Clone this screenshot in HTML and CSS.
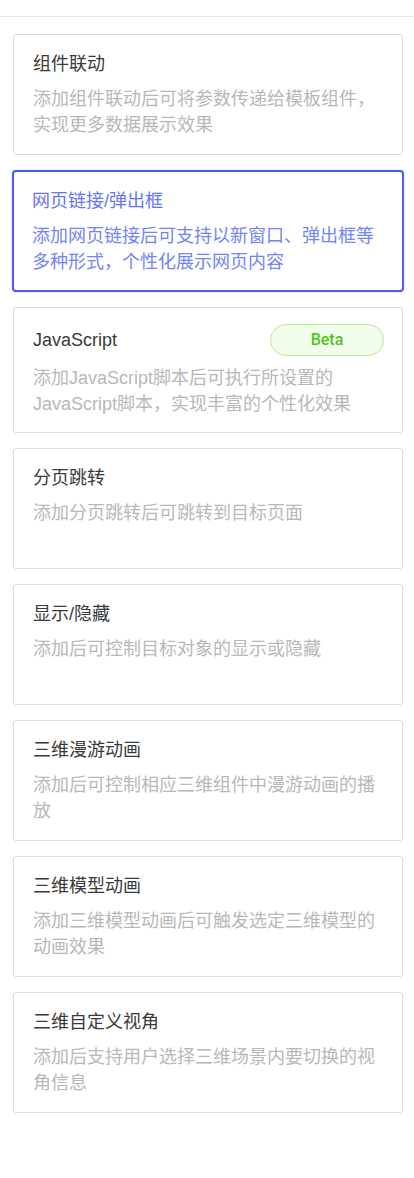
FILE: index.html
```html
<!DOCTYPE html>
<html lang="zh-CN">
<head>
<meta charset="utf-8">
<title>交互列表</title>
<link rel="stylesheet" href="styles.css">
</head>
<body>
<div class="page">
  <div class="topline"></div>
  <div class="list">
    <div class="card">
      <div class="card-head"><span class="card-title">组件联动</span></div>
      <div class="card-desc">添加组件联动后可将参数传递给模板组件，实现更多数据展示效果</div>
    </div>
    <div class="card card-active">
      <div class="card-head"><span class="card-title">网页链接/弹出框</span></div>
      <div class="card-desc">添加网页链接后可支持以新窗口、弹出框等多种形式，个性化展示网页内容</div>
    </div>
    <div class="card">
      <div class="card-head card-head-badge"><span class="card-title">JavaScript</span><span class="badge">Beta</span></div>
      <div class="card-desc">添加JavaScript脚本后可执行所设置的JavaScript脚本，实现丰富的个性化效果</div>
    </div>
    <div class="card">
      <div class="card-head"><span class="card-title">分页跳转</span></div>
      <div class="card-desc">添加分页跳转后可跳转到目标页面</div>
    </div>
    <div class="card">
      <div class="card-head"><span class="card-title">显示/隐藏</span></div>
      <div class="card-desc">添加后可控制目标对象的显示或隐藏</div>
    </div>
    <div class="card">
      <div class="card-head"><span class="card-title">三维漫游动画</span></div>
      <div class="card-desc">添加后可控制相应三维组件中漫游动画的播放</div>
    </div>
    <div class="card">
      <div class="card-head"><span class="card-title">三维模型动画</span></div>
      <div class="card-desc">添加三维模型动画后可触发选定三维模型的动画效果</div>
    </div>
    <div class="card">
      <div class="card-head"><span class="card-title">三维自定义视角</span></div>
      <div class="card-desc">添加后支持用户选择三维场景内要切换的视角信息</div>
    </div>
  </div>
</div>
</body>
</html>
```

FILE: styles.css
```css
* {
  box-sizing: border-box;
}

html, body {
  margin: 0;
  padding: 0;
  background: #ffffff;
}

body {
  font-family: "Liberation Sans", "Noto Sans CJK SC", Arial, sans-serif;
  color: #333333;
}

.page {
  width: 414px;
  min-height: 1178px;
  padding-top: 16px;
}

.topline {
  height: 1px;
  background: #e6e6e6;
}

.list {
  display: flex;
  flex-direction: column;
  gap: 15px;
  padding: 17px 11px 0 13px;
}

.card {
  min-height: 121px;
  border: 1px solid #dcdcdc;
  border-radius: 3px;
  padding: 16px 19px 15px 19px;
  background: #ffffff;
}

.card-active {
  border: 2px solid #4a5cf2;
  margin: 0 -1px;
  padding: 15px 18px 15px 18px;
  border-radius: 4px;
  box-shadow: 0 0 2px rgba(74, 92, 242, 0.35);
}

.card-head {
  display: flex;
  align-items: center;
  justify-content: space-between;
  min-height: 26px;
  margin-bottom: 9px;
}

.card-active .card-head {
  margin-top: 1px;
}

.card-head-badge {
  min-height: 32px;
  margin-bottom: 9px;
}

.card-title {
  font-size: 18px;
  line-height: 26px;
  color: #3a3a3a;
}

.card-active .card-title {
  color: #6576f3;
}

.card-desc {
  font-size: 18px;
  line-height: 26px;
  color: #b8b8b8;
}

.card-active .card-desc {
  color: #7384f4;
}

.badge {
  width: 114px;
  height: 32px;
  border: 1px solid #b9ec95;
  border-radius: 16px;
  background: #f3fdec;
  color: #52c41a;
  font-family: Roboto, "Liberation Sans", sans-serif;
  font-weight: 500;
  font-size: 16px;
  line-height: 30px;
  text-align: center;
  margin-right: -1px;
}
```
